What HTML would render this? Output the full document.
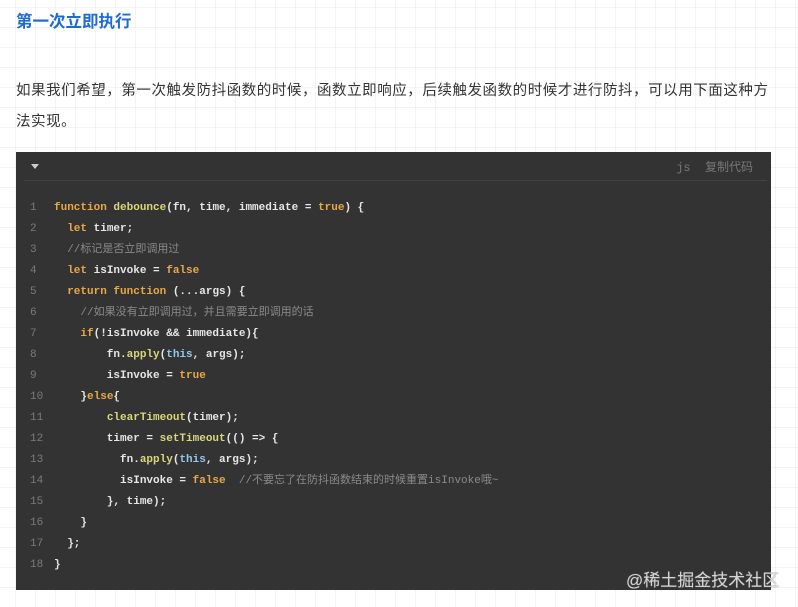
<!DOCTYPE html>
<html><head><meta charset="utf-8"><style>
html,body{margin:0;padding:0}
body{width:798px;height:607px;overflow:hidden;position:relative;background:#fff;
background-image:linear-gradient(90deg,rgba(60,60,60,.06) 1px,transparent 1px),linear-gradient(rgba(60,60,60,.06) 1px,transparent 1px);
background-size:20px 20px;background-position:15px 0,0 7px;
font-family:"Liberation Sans","Noto Sans CJK SC",sans-serif;}
.h{position:absolute;left:16px;top:10px;font-size:16.5px;font-weight:bold;color:#1e6bd4;line-height:24px}
.p{position:absolute;left:16px;top:76px;width:760px;font-size:14.5px;letter-spacing:0.55px;color:#333;line-height:31px}
.code{position:absolute;left:16px;top:152px;width:755px;height:438px;background:#333}
.hd{position:absolute;left:8px;right:4px;top:0;height:28px;border-bottom:1px solid #444}
.tri{position:absolute;left:7px;top:12px;width:0;height:0;border-left:4px solid transparent;border-right:4px solid transparent;border-top:5px solid #ccc}
.lang{position:absolute;right:14px;top:6px;font-size:12px;color:#777;font-family:"Liberation Mono","Noto Sans CJK SC",monospace}
pre{position:absolute;left:0;top:46px;margin:0;font-family:"Liberation Mono","Noto Sans CJK SC",monospace;font-size:11px;font-weight:bold;line-height:21px;color:#e6e6e6}
.n{display:inline-block;width:38px;padding-left:14px;box-sizing:border-box;color:#7a7a7a;font-weight:normal;line-height:21px;height:21px;vertical-align:top}
.k{color:#e8a845}.f{color:#d9d77a}.c{color:#8a8a8a;font-weight:normal}.t{color:#8fc8e8}
.wm{position:absolute;left:626px;top:566px;font-size:17px;color:rgba(230,230,230,.85);text-shadow:0 0 1px #777}
</style></head><body>
<div class="h">第一次立即执行</div>
<div class="p">如果我们希望，第一次触发防抖函数的时候，函数立即响应，后续触发函数的时候才进行防抖，可以用下面这种方法实现。</div>
<div class="code"><div class="hd"><div class="tri"></div><div class="lang">js&nbsp;&nbsp;复制代码</div></div>
<pre><span class="n">1</span><span class="k">function</span> <span class="f">debounce</span>(fn, time, immediate = <span class="k">true</span>) {
<span class="n">2</span>  <span class="k">let</span> timer;
<span class="n">3</span>  <span class="c">//标记是否立即调用过</span>
<span class="n">4</span>  <span class="k">let</span> isInvoke = <span class="k">false</span>
<span class="n">5</span>  <span class="k">return</span> <span class="k">function</span> (...args) {
<span class="n">6</span>    <span class="c">//如果没有立即调用过，并且需要立即调用的话</span>
<span class="n">7</span>    <span class="k">if</span>(!isInvoke &amp;&amp; immediate){
<span class="n">8</span>        fn.<span class="f">apply</span>(<span class="t">this</span>, args);
<span class="n">9</span>        isInvoke = <span class="k">true</span>
<span class="n">10</span>    }<span class="k">else</span>{
<span class="n">11</span>        <span class="f">clearTimeout</span>(timer);
<span class="n">12</span>        timer = <span class="f">setTimeout</span>(() =&gt; {
<span class="n">13</span>          fn.<span class="f">apply</span>(<span class="t">this</span>, args);
<span class="n">14</span>          isInvoke = <span class="k">false</span>  <span class="c">//不要忘了在防抖函数结束的时候重置isInvoke哦~</span>
<span class="n">15</span>        }, time);
<span class="n">16</span>    }
<span class="n">17</span>  };
<span class="n">18</span>}</pre></div>
<div class="wm">@稀土掘金技术社区</div>
</body></html>
